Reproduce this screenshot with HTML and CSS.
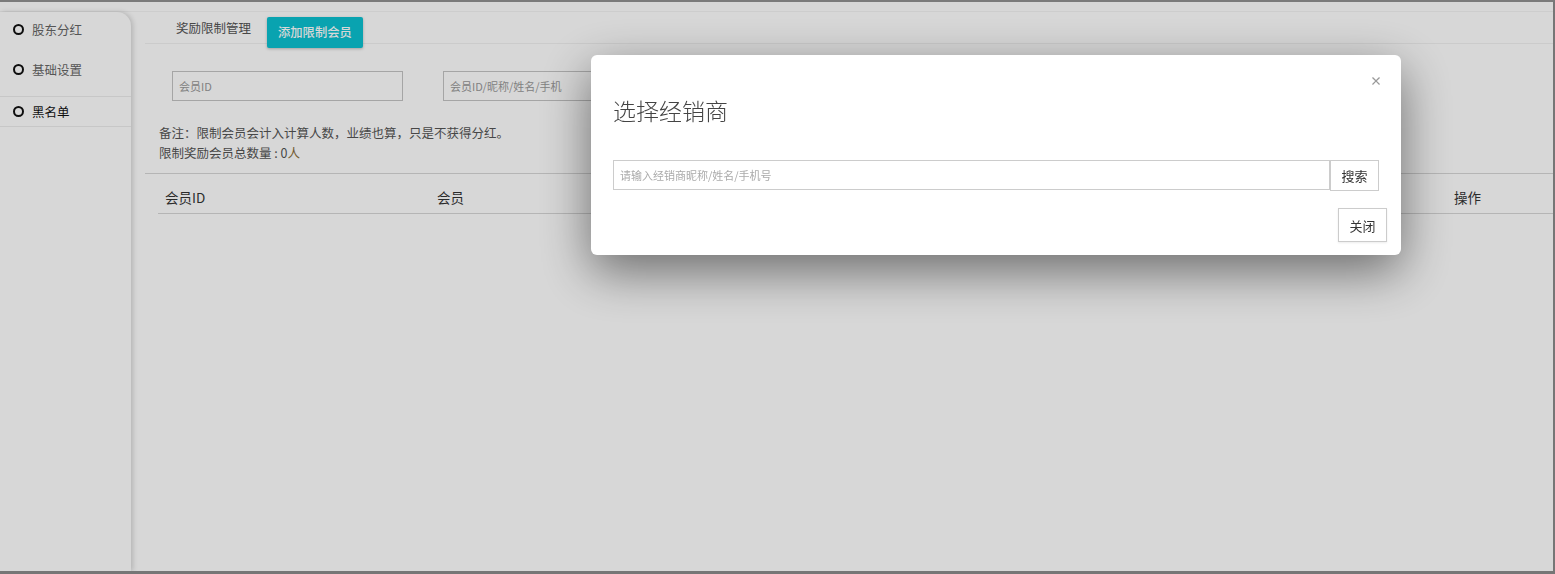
FILE: index.html
```html
<!DOCTYPE html>
<html lang="zh-CN">
<head>
    <meta charset="UTF-8">
    <title>黑名单</title>
    <link rel="stylesheet" href="styles.css">
</head>
<body>
    <div class="topbar"></div>
    <div class="layout">
        <aside class="sidebar">
            <div class="menu-group">
                <a class="menu-item" href="#"><span class="dot"></span>股东分红</a>
                <a class="menu-item" href="#"><span class="dot"></span>基础设置</a>
            </div>
            <a class="menu-item active" href="#"><span class="dot"></span>黑名单</a>
        </aside>
        <main class="main">
            <div class="tabs">
                <a class="tab" href="#">奖励限制管理</a>
                <a class="tab-btn" href="#">添加限制会员</a>
            </div>
            <div class="filters">
                <input type="text" class="field" placeholder="会员ID">
                <input type="text" class="field" placeholder="会员ID/昵称/姓名/手机">
            </div>
            <div class="notes">
                <p>备注：限制会员会计入计算人数，业绩也算，只是不获得分红。</p>
                <p>限制奖励会员总数量 : 0<span class="unit">人</span></p>
            </div>
            <div class="table-wrap">
                <table class="list">
                    <thead>
                        <tr>
                            <th class="col-id">会员ID</th>
                            <th class="col-member">会员</th>
                            <th class="col-fill"></th>
                            <th class="col-op">操作</th>
                        </tr>
                    </thead>
                </table>
            </div>
        </main>
    </div>

    <div class="backdrop"></div>
    <div class="modal">
        <div class="modal-content">
            <span class="close">×</span>
            <h3 class="modal-title">选择经销商</h3>
            <div class="search-row">
                <input type="text" class="search-input" placeholder="请输入经销商昵称/姓名/手机号">
                <button class="btn">搜索</button>
            </div>
            <div class="modal-footer">
                <button class="btn btn-close">关闭</button>
            </div>
        </div>
    </div>
</body>
</html>
```

FILE: styles.css
```css
* {
    box-sizing: border-box;
}
html, body {
    height: 100%;
}
body {
    margin: 0;
    background: #fff;
    border-top: 2px solid #929292;
    border-bottom: 3px solid #8c8c8c;
    border-right: 2px solid #8c8c8c;
    font-family: "Noto Sans CJK SC", "Liberation Sans", sans-serif;
    font-size: 13px;
    color: #555;
    overflow: hidden;
    display: flex;
    flex-direction: column;
}
a {
    text-decoration: none;
}
p {
    margin: 0;
}

.topbar {
    height: 10px;
    border-bottom: 1px solid #f3f3f3;
    flex: none;
}

.layout {
    display: flex;
    flex: 1;
}

/* menu lateral */
.sidebar {
    width: 131px;
    flex: none;
    border-top-right-radius: 14px;
    box-shadow: 2px 0 5px rgba(0,0,0,0.16);
    background: #fff;
    position: relative;
    z-index: 1;
}
.menu-group {
    padding: 0 0 9px;
    border-bottom: 1px solid #ececec;
}
.menu-item {
    display: flex;
    align-items: center;
    height: 35px;
    padding-left: 13px;
    color: #666;
    font-size: 12.5px;
}
.menu-item + .menu-item {
    margin-top: 5px;
}
.menu-item.active {
    height: 30px;
    color: #111;
    border-bottom: 1px solid #ececec;
}
.dot {
    width: 11px;
    height: 11px;
    border: 2px solid #111;
    border-radius: 50%;
    margin-right: 8px;
}

.main {
    flex: 1;
    padding-left: 14px;
}

.tabs {
    display: flex;
    align-items: flex-start;
    height: 32px;
    border-bottom: 1px solid #f1f1f1;
    padding-left: 31px;
}
.tab {
    line-height: 32px;
    color: #555;
    font-size: 12.5px;
}
.tab-btn {
    margin-left: 16px;
    margin-top: 5px;
    height: 31px;
    line-height: 31px;
    padding: 0 11px;
    background: #0bc2d1;
    color: #fff;
    font-size: 12.3px;
    font-weight: 500;
    border-radius: 2px;
    box-shadow: 0 1px 3px rgba(0,0,0,0.25);
}

.filters {
    display: flex;
    gap: 40px;
    padding: 27px 0 0 27px;
}
.field {
    width: 231px;
    height: 30px;
    border: 1px solid #c4c4c4;
    padding: 0 6px;
    font-family: inherit;
    font-size: 11px;
    background: #fff;
}
.field::placeholder {
    color: #999;
}

.notes {
    padding: 22px 0 0 14px;
    line-height: 20px;
    font-size: 12.5px;
    color: #555;
    height: 73px;
    border-bottom: 1px solid #d7d7d7;
}
.unit {
    color: #8a6d3b;
}

.table-wrap {
    padding-left: 13px;
}
.list {
    width: 100%;
    border-collapse: collapse;
}
.list th {
    height: 39px;
    text-align: left;
    font-weight: normal;
    font-size: 13.5px;
    color: #333;
    border-bottom: 1px solid #d7d7d7;
    padding: 8px 0 0;
}
.col-id {
    width: 279px;
    padding-left: 7px !important;
}
.col-member {
    width: 300px;
}
.col-op {
    width: 99px;
}

/* fondo oscuro del modal */
.backdrop {
    position: fixed;
    inset: 0;
    background: rgba(0,0,0,0.155);
    z-index: 10;
}
.modal {
    position: fixed;
    left: 591px;
    top: 55px;
    width: 810px;
    z-index: 20;
}
.modal-content {
    position: relative;
    background: #fff;
    border-radius: 6px;
    height: 200px;
    padding: 0 14px 0 22px;
    box-shadow: 0 16px 50px rgba(0,0,0,0.5);
}
.close {
    position: absolute;
    right: 19px;
    top: 17px;
    font-size: 12px;
    font-weight: bold;
    color: #999;
}
.modal-title {
    margin: 0;
    padding-top: 39px;
    font-size: 23px;
    line-height: 32px;
    font-weight: 300;
    color: #444;
}
.search-row {
    display: flex;
    margin-top: 34px;
    padding-right: 8px;
}
.search-input {
    flex: 1;
    height: 30px;
    border: 1px solid #ccc;
    padding: 0 6px;
    font-family: inherit;
    font-size: 11px;
}
.search-input::placeholder {
    color: #aaa;
}
.btn {
    width: 49px;
    height: 31px;
    background: #fff;
    border: 1px solid #ccc;
    font-family: inherit;
    font-size: 13px;
    color: #333;
    padding: 0;
}
.modal-footer {
    display: flex;
    justify-content: flex-end;
    margin-top: 17px;
}
.btn-close {
    height: 34px;
    box-shadow: 0 1px 2px rgba(0,0,0,0.08);
}
```
